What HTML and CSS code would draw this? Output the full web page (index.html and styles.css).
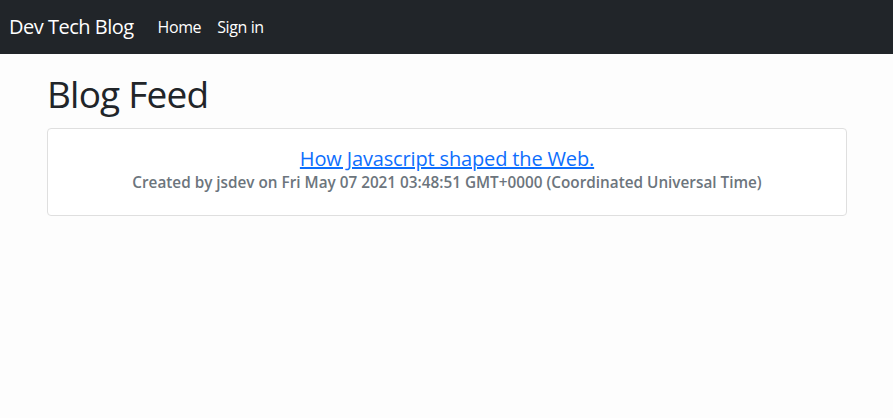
FILE: index.html
```html
<!DOCTYPE html>
<html lang="en">
<head>
<meta charset="utf-8">
<title>Dev Tech Blog</title>
<link rel="stylesheet" href="styles.css">
</head>
<body>
<nav class="navbar">
  <a class="brand" href="#">Dev Tech Blog</a>
  <ul class="nav-links">
    <li><a href="#">Home</a></li>
    <li><a href="#">Sign in</a></li>
  </ul>
</nav>
<main class="container">
  <h1 class="page-title">Blog Feed</h1>
  <div class="card">
    <div class="card-body">
      <a class="card-title" href="#">How Javascript shaped the Web.</a>
      <h6 class="card-subtitle">Created by jsdev on Fri May 07 2021 03:48:51 GMT+0000 (Coordinated Universal Time)</h6>
    </div>
  </div>
</main>
</body>
</html>
```
FILE: styles.css
```css
* { box-sizing: border-box; }
html, body { margin: 0; padding: 0; }
body {
  font-family: "Open Sans", "Noto Sans", sans-serif;
  background: #fdfdfd;
  color: #212529;
  font-size: 16px;
  line-height: 1.5;
}
.navbar {
  background: #212529;
  height: 54px;
  display: flex;
  align-items: center;
  padding: 0 9px;
}
.brand {
  color: #fff;
  text-decoration: none;
  font-size: 20px;
  margin-right: 16px;
  letter-spacing: -0.5px;
}
.nav-links {
  list-style: none;
  display: flex;
  margin: 0;
  padding: 0;
}
.nav-links a {
  display: block;
  color: #fff;
  text-decoration: none;
  padding: 0 8px;
  letter-spacing: -0.4px;
}
.container {
  width: 800px;
  margin: 0 0 0 47px;
  padding-top: 18px;
}
.page-title {
  font-size: 37px;
  font-weight: 500;
  line-height: 1.2;
  margin: 0 0 12px 0;
  letter-spacing: -0.8px;
}
.card {
  border: 1px solid #dfdfdf;
  border-radius: 4px;
  background: #fff;
}
.card-body {
  height: 86px;
  display: flex;
  flex-direction: column;
  align-items: center;
  padding: 17px 16px 0;
}
.card-title {
  color: #0d6efd;
  text-decoration: underline;
  font-size: 20px;
  line-height: 26px;
  letter-spacing: -0.15px;
}
.card-subtitle {
  margin: 0;
  color: #6c757d;
  font-size: 15.3px;
  font-weight: 600;
  line-height: 21px;
  letter-spacing: 0;
}
```
